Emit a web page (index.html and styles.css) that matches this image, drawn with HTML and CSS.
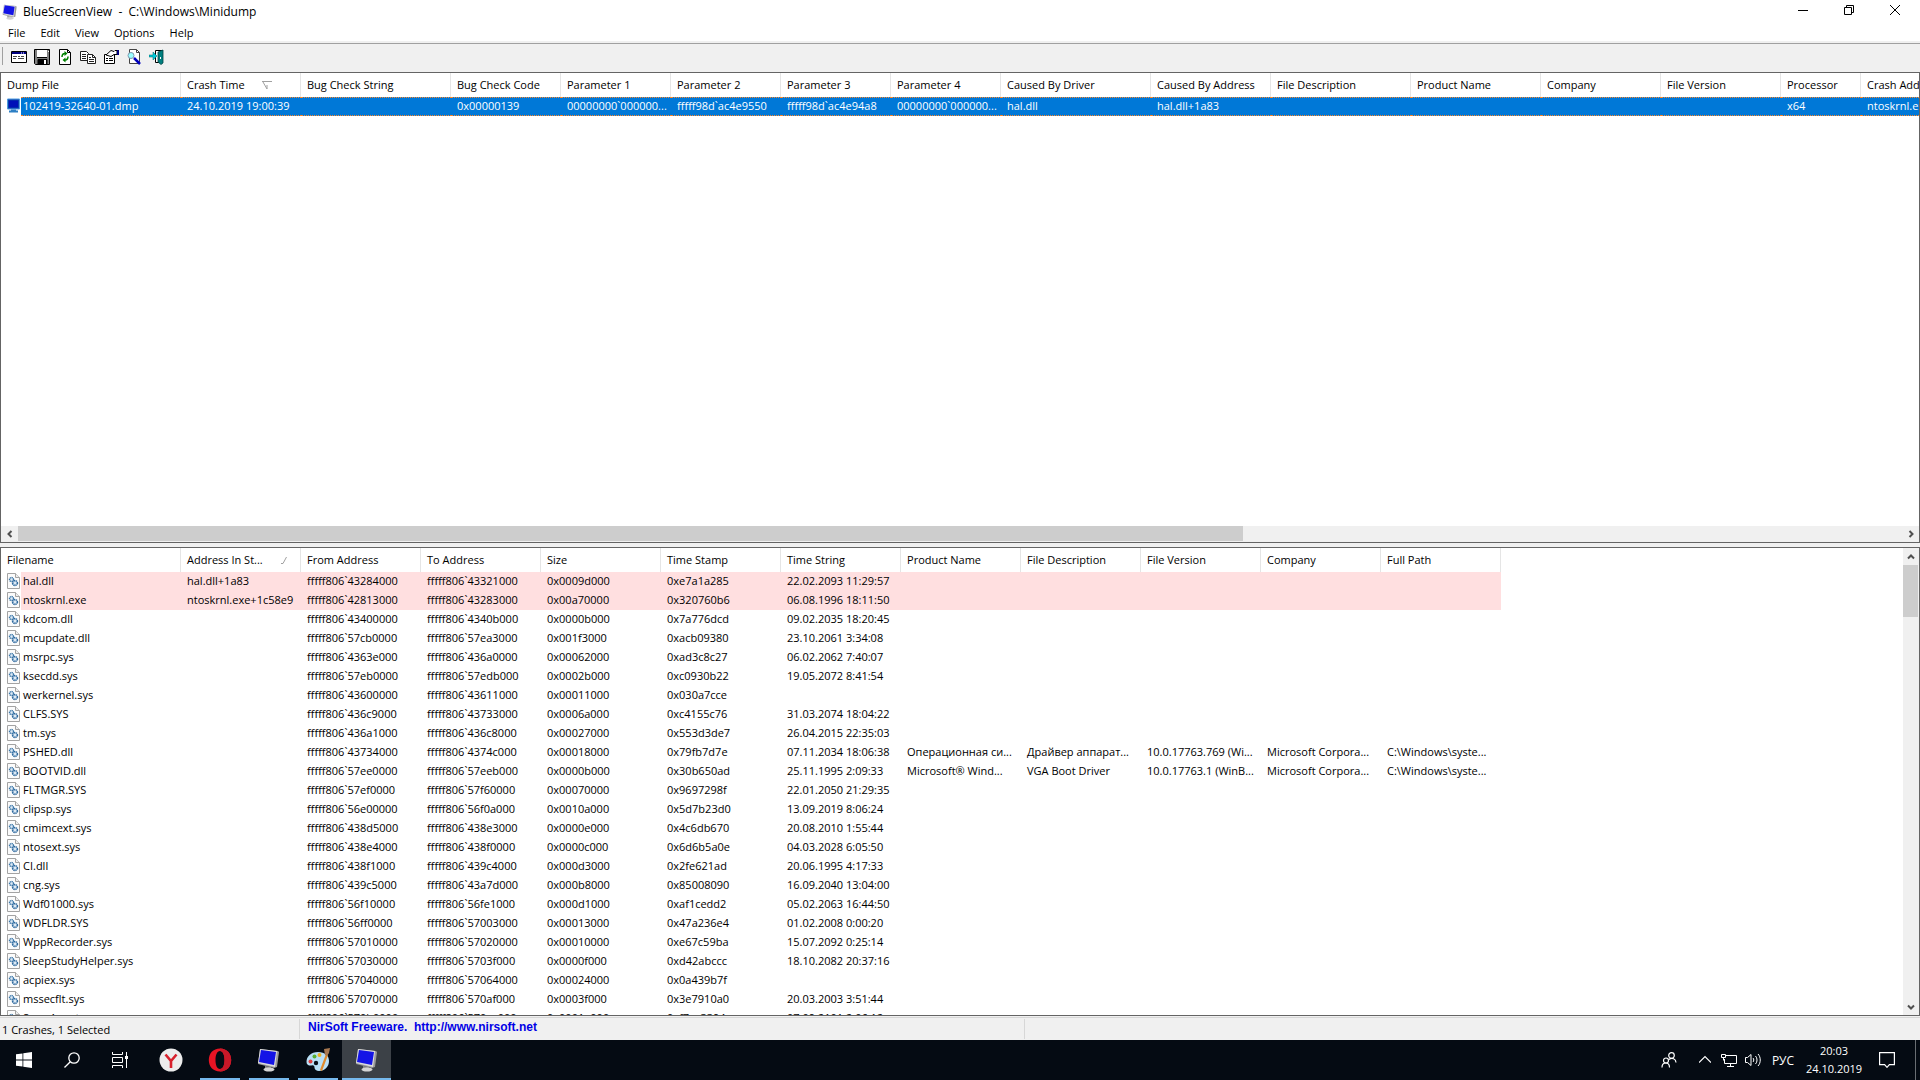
FILE: index.html
```
<!DOCTYPE html>
<html lang="en">
<head>
    <meta charset="UTF-8">
    <meta name="viewport" content="width=device-width, initial-scale=1.0">
    <title>BlueScreenView - C:\Windows\Minidump</title>
    <link rel="stylesheet" href="styles.css">
</head>
<body>
    <svg class="symbols" aria-hidden="true">
        <symbol id="monitor" viewBox="0 0 24 24">
            <path d="M8 18l6 1 1 2-7 1z" fill="#8c8c8c"/>
            <ellipse cx="12" cy="21.5" rx="5.5" ry="2" fill="#d4d4d4"/>
            <path d="M3 1l18 2 1 1-2 15-3 1-16-4z" fill="#9a9a9a"/>
            <path d="M3 1l17 2-2 16L1 15z" fill="#dcdcdc"/>
            <path d="M4 2l15 2-2 13L2 14z" fill="#1414e6"/>
        </symbol>
        <symbol id="dll" viewBox="0 0 13 16">
            <path d="M.5.5h8l4 4v11H.5z" fill="#fbfbfb" stroke="#a3a3a3"/>
            <path d="M8.500.5v4h4" fill="#eee" stroke="#a3a3a3"/>
            <circle cx="4.500" cy="6.500" r="2" fill="#dce9f5" stroke="#3b76a8" stroke-width="1.400" stroke-dasharray="1.200 .5"/>
            <circle cx="8" cy="10" r="2.400" fill="#dce9f5" stroke="#2f6a9e" stroke-width="1.600" stroke-dasharray="1.300 .5"/>
        </symbol>
    </svg>

    <header class="titlebar">
        <svg class="app-icon"><use href="#monitor"/></svg>
        <h1>BlueScreenView&nbsp; -&nbsp; C:\Windows\Minidump</h1>
        <div class="window-buttons">
            <button aria-label="Minimize"><svg viewBox="0 0 10 10"><path d="M0 5.500h10"/></svg></button>
            <button aria-label="Restore"><svg viewBox="0 0 10 10"><path d="M.5 2.500h7v7h-7zM2.500 2.500v-2h7v7h-2"/></svg></button>
            <button aria-label="Close"><svg viewBox="0 0 10 10"><path d="M0 0l10 10M10 0L0 10"/></svg></button>
        </div>
    </header>

    <nav class="menubar">
        <button>File</button>
        <button>Edit</button>
        <button>View</button>
        <button>Options</button>
        <button>Help</button>
    </nav>

    <div class="toolbar">
        <button aria-label="Advanced options">
            <svg viewBox="0 0 16 16"><path d="M.5 2.500h15v11H.5z" fill="#fff" stroke="#000"/><path d="M1 3h14v2H1z" fill="#000080"/><path d="M2 7.500h4M7 7.500h2M10 7.500h3M2 9.500h3M7 9.500h6" stroke="#444"/><path d="M10 4h1m1 0h1" stroke="#fff"/></svg>
        </button>
        <button aria-label="Save">
            <svg viewBox="0 0 16 16"><path d="M.5.5h15v15h-14l-1-1z" fill="#808080" stroke="#000"/><path d="M3 1h10v7H3z" fill="#fff"/><path d="M3 8.500h10M4 10.500h9v5H4z" stroke="#000" fill="#000"/><path d="M10 11h2v4h-2z" fill="#fff"/><path d="M14 2h1v1h-1z" fill="#fff"/></svg>
        </button>
        <button aria-label="Refresh">
            <svg viewBox="0 0 16 16"><path d="M2.500.5h8l3 3v12h-11z" fill="#fff" stroke="#000"/><path d="M10.500.5v3h3" fill="none" stroke="#000"/><path d="M5 8c0-3 1.500-3.500 3-3.500M11 7.500c0 3-1.500 3.500-3 3.500" fill="none" stroke="#008000" stroke-width="1.500"/><path d="M7.500 2v5l3-2.500zM8.500 8.500v5l-3-2.500z" fill="#008000"/></svg>
        </button>
        <button aria-label="Copy">
            <svg viewBox="0 0 16 16"><path d="M.5 2.500h6l2 2v7h-8z" fill="#fff" stroke="#222"/><path d="M2 5.500h4M2 7.500h4M2 9.500h4" stroke="#222"/><path d="M7.500 5.500h5l3 3v6h-8z" fill="#fff" stroke="#222"/><path d="M12.500 5.500v3h3M9 8.500h2M9 10.500h5M9 12.500h5" fill="none" stroke="#222"/></svg>
        </button>
        <button aria-label="Properties">
            <svg viewBox="0 0 16 16"><path d="M1.500 5.500h10v9h-10z" fill="#fff" stroke="#000"/><path d="M3 9.500h2M6 9.500h4M3 11.500h2M6 11.500h4" stroke="#000"/><path d="M3 6l5-4.500 3 1 1-1h2v4h-3L8 7.500z" fill="#fff" stroke="#000"/><path d="M14 1h2v5h-2z" fill="#000080"/></svg>
        </button>
        <button aria-label="Find">
            <svg viewBox="0 0 16 16"><path d="M3.500.5h7l3 3v11h-10z" fill="#fff" stroke="#444"/><path d="M10.500.5v3h3" fill="none" stroke="#444"/><circle cx="5" cy="6.500" r="3" fill="#9ff" stroke="#8098b0"/><path d="M8 9l6 6" stroke="#0000c0" stroke-width="2.500"/></svg>
        </button>
        <button aria-label="Exit">
            <svg viewBox="0 0 16 16"><path d="M6.500 1.500h7v12h-7z" fill="#fff" stroke="#000"/><path d="M9 3l5-2v13l-2 1.500L9 13z" fill="#008080" stroke="#044" stroke-width=".8"/><path d="M11 8h1v2h-1z" fill="#fff"/><path d="M0 6h4V3l4 4-4 4V8H0z" fill="#00c8d8" stroke="#066" stroke-width=".5"/></svg>
        </button>
    </div>

    <main class="panes">
        <section class="pane pane-crashes">
            <div class="list">
                <table>
                    <colgroup>
                        <col class="w20"><col class="w160"><col class="w120"><col class="w150">
                        <col class="w110"><col class="w110"><col class="w110"><col class="w110"><col class="w110">
                        <col class="w150"><col class="w120"><col class="w140"><col class="w130">
                        <col class="w120"><col class="w120"><col class="w80"><col class="w120">
                    </colgroup>
                    <thead>
                        <tr>
                            <th colspan="2">Dump File</th>
                            <th>Crash Time<svg class="sort sort-down" viewBox="0 0 10 8"><path d="M0 .5h10M1 1l4 7V4"/></svg></th>
                            <th>Bug Check String</th>
                            <th>Bug Check Code</th>
                            <th>Parameter 1</th>
                            <th>Parameter 2</th>
                            <th>Parameter 3</th>
                            <th>Parameter 4</th>
                            <th>Caused By Driver</th>
                            <th>Caused By Address</th>
                            <th>File Description</th>
                            <th>Product Name</th>
                            <th>Company</th>
                            <th>File Version</th>
                            <th>Processor</th>
                            <th>Crash Address</th>
                        </tr>
                    </thead>
                    <tbody>
                        <tr class="selected">
                            <td class="icon"><svg viewBox="0 0 13 15"><path d="M.5.500h12v10H.5z" fill="#0a3fa8" stroke="#4d9be0"/><path d="M2 2h9v7H2z" fill="#0010b8"/><path d="M4 11h5v1h2v2H2v-2h2z" fill="#2c7fc4"/></svg></td>
                            <td class="name">102419-32640-01.dmp</td>
                            <td>24.10.2019 19:00:39</td>
                            <td></td>
                            <td>0x00000139</td>
                            <td>00000000`000000...</td>
                            <td>fffff98d`ac4e9550</td>
                            <td>fffff98d`ac4e94a8</td>
                            <td>00000000`000000...</td>
                            <td>hal.dll</td>
                            <td>hal.dll+1a83</td>
                            <td></td>
                            <td></td>
                            <td></td>
                            <td></td>
                            <td>x64</td>
                            <td>ntoskrnl.exe+1c58e9</td>
                        </tr>
                    </tbody>
                </table>
            </div>
            <div class="scrollbar horizontal">
                <button aria-label="Scroll left"><svg viewBox="0 0 8 8"><path d="M5.500 1l-3 3 3 3"/></svg></button>
                <div class="track"><div class="thumb"></div></div>
                <button aria-label="Scroll right"><svg viewBox="0 0 8 8"><path d="M2.500 1l3 3-3 3"/></svg></button>
            </div>
        </section>

        <section class="pane pane-drivers">
            <div class="list">
                <table>
                    <colgroup>
                        <col class="w20"><col class="w160"><col class="w120" span="11">
                    </colgroup>
                    <thead>
                        <tr>
                            <th colspan="2">Filename</th>
                            <th>Address In St...<svg class="sort sort-up" viewBox="0 0 6 7"><path d="M0 6.500h2L5.500 0"/></svg></th>
                            <th>From Address</th>
                            <th>To Address</th>
                            <th>Size</th>
                            <th>Time Stamp</th>
                            <th>Time String</th>
                            <th>Product Name</th>
                            <th>File Description</th>
                            <th>File Version</th>
                            <th>Company</th>
                            <th>Full Path</th>
                        </tr>
                    </thead>
                    <tbody id="drivers"></tbody>
                </table>
            </div>
            <div class="scrollbar vertical">
                <button aria-label="Scroll up"><svg viewBox="0 0 8 8"><path d="M1 5.500l3-3 3 3"/></svg></button>
                <div class="track"><div class="thumb"></div></div>
                <button aria-label="Scroll down"><svg viewBox="0 0 8 8"><path d="M1 2.500l3 3 3-3"/></svg></button>
            </div>
        </section>
    </main>

    <div class="statusbar">
        <span class="status-count">1 Crashes, 1 Selected</span>
        <span class="status-link"><a href="http://www.nirsoft.net">NirSoft Freeware.&nbsp; http://www.nirsoft.net</a></span>
    </div>

    <footer class="taskbar">
        <div class="task-buttons">
            <button aria-label="Start"><svg class="s16" viewBox="0 0 16 16" fill="#fff"><path d="M0 2.300L6.500 1.400v6.200H0zM7.300 1.300L16 0v7.600H7.300zM0 8.400h6.500v6.200L0 13.700zM7.300 8.400H16V16l-8.700-1.300z"/></svg></button>
            <button aria-label="Search"><svg class="s16" viewBox="0 0 16 16" fill="none" stroke="#fff" stroke-width="1.300"><circle cx="10" cy="6" r="5.200"/><path d="M6.300 9.700L.5 15.500"/></svg></button>
            <button aria-label="Task View"><svg class="s16" viewBox="0 0 16 16" fill="none" stroke="#fff"><path d="M.5 0v2.500h10V0M.5 5.500h10v5H.5zM.5 16v-2.500h10V16M14.500 0v16"/><path d="M13 4h3v3h-3z" fill="#fff" stroke="none"/></svg></button>
            <div class="apps">
                <button aria-label="Yandex"><svg class="s24" viewBox="0 0 24 24"><circle cx="12" cy="12" r="11.500" fill="#ececec"/><path d="M6.500 6.500L12 13l5.500-6.500M12 12.500V20" fill="none" stroke="#d8202c" stroke-width="2.600"/></svg></button>
                <button class="open" aria-label="Opera"><svg class="s24" viewBox="0 0 24 24"><path fill-rule="evenodd" d="M12 .5C5 .5.800 5.500.8 12S5 23.500 12 23.500 23.200 18.500 23.200 12 19 .5 12 .5zM12 3c3 0 4.500 4 4.500 9s-1.500 9-4.500 9-4.500-4-4.500-9S9 3 12 3z" fill="#e81424"/><path d="M12 .5c7 0 11.200 5 11.200 11.500S19 23.500 12 23.500V21c3 0 4.500-4 4.500-9S15 3 12 3z" fill="#c81828"/></svg></button>
                <button class="open" aria-label="BlueScreenView"><svg class="s24"><use href="#monitor"/></svg></button>
                <button class="open" aria-label="Paint"><svg class="s24" viewBox="0 0 24 24"><path d="M12 4C5 4 .5 8.500.5 14c0 3 3 4 5 3.500 2-.5 3 .5 3 2 0 2 2 3.500 4.500 3.500C19 23 23 18.500 23 13S19 4 12 4z" fill="#b9e0f6"/><circle cx="10" cy="15" r="2.200" fill="#0a1018"/><circle cx="4.500" cy="13.500" r="2" fill="#e04040"/><circle cx="8.500" cy="8.500" r="2" fill="#58b030"/><circle cx="13.500" cy="7" r="2" fill="#f0b020"/><path d="M20 6l2 1-6 16-2-1z" fill="#e08a2c"/><path d="M18 1l6-1-1 5-2 3-2-1z" fill="#a87850"/></svg></button>
                <button class="open active" aria-label="BlueScreenView"><svg class="s24"><use href="#monitor"/></svg></button>
            </div>
        </div>
        <div class="tray">
            <button aria-label="People"><svg class="s16" viewBox="0 0 16 16" fill="none" stroke="#fff" stroke-width="1.200"><circle cx="10.500" cy="3.500" r="2.800"/><circle cx="5" cy="8.500" r="2.500"/><path d="M8 7.500c3-2.500 7-.5 7 3M1 15.500c0-6 7.500-6 7.500 0"/></svg></button>
            <button class="narrow" aria-label="Show hidden icons"><svg class="s12" viewBox="0 0 12 12" fill="none" stroke="#fff" stroke-width="1.200"><path d="M0 8.500l6-6 6 6"/></svg></button>
            <button class="narrow" aria-label="Network"><svg class="s16" viewBox="0 0 16 16" fill="none" stroke="#fff"><path d="M5 3.500h10.500v8H3.500V7M9.500 12v2.500M6 14.500h7M.5 2.500h4v3h-4zM2.500 5.500v3"/></svg></button>
            <button class="narrow" aria-label="Volume"><svg class="s16" viewBox="0 0 16 16" fill="none" stroke="#fff"><path d="M.5 5.500h2l3.500-3v11l-3.500-3h-2zM8 6c1 1 1 3 0 4M10.500 4c2 2 2 6 0 8M13 2c3 3 3 9 0 12"/></svg></button>
            <button class="lang">РУС</button>
            <button class="clock"><time>20:03</time><time>24.10.2019</time></button>
            <button class="notify" aria-label="Notifications"><svg class="s16" viewBox="0 0 16 16" fill="none" stroke="#fff" stroke-width="1.200"><path d="M.6.6h14.800v12h-5L8 15.300 5.600 12.600h-5z"/></svg></button>
            <button class="show-desktop" aria-label="Show desktop"></button>
        </div>
    </footer>

    <script src="script.js"></script>
</body>
</html>
```

FILE: styles.css
```
* {
    box-sizing: border-box;
}
body {
    margin: 0;
    height: 100vh;
    display: flex;
    flex-direction: column;
    overflow: hidden;
    background-color: #fff;
    color: #000;
    font-family: "Open Sans", "Noto Sans", sans-serif;
    font-size: 11px;
}
button {
    border: none;
    padding: 0;
    margin: 0;
    background: none;
    color: inherit;
    font: inherit;
    display: flex;
    align-items: center;
    justify-content: center;
}
.symbols {
    display: none;
}

/* title bar and menu */
.titlebar {
    display: flex;
    align-items: center;
    height: 23px;
    padding: 0 2px;
}
.titlebar h1 {
    margin: 0 0 0 5px;
    font-size: 12px;
    font-weight: normal;
    flex: 1;
}
.app-icon {
    width: 16px;
    height: 16px;
}
.window-buttons {
    display: flex;
    align-self: flex-start;
}
.window-buttons button {
    width: 46px;
    height: 20px;
}
.window-buttons svg {
    width: 10px;
    height: 10px;
    fill: none;
    stroke: #000;
}
.menubar {
    display: flex;
    height: 20px;
    gap: 1px;
    padding-left: 1px;
    border-bottom: 2px solid #f0f0f0;
}
.menubar button {
    padding: 0 7px;
}

/* toolbar */
.toolbar {
    display: flex;
    align-items: center;
    height: 29px;
    gap: 7px;
    padding: 0 0 3px 8px;
    background-color: #f0f0f0;
    border-top: 1px solid #a0a0a0;
    background-image: linear-gradient(#a0a0a0, #a0a0a0);
    background-repeat: no-repeat;
    background-size: 1px 18px;
    background-position: 2px 3px;
}
.toolbar button {
    width: 16px;
    height: 24px;
}
.toolbar svg {
    width: 16px;
    height: 16px;
}
.toolbar button:first-child {
    margin-left: 3px;
}

/* panes */
.panes {
    flex: 1;
    min-height: 0;
    display: flex;
    flex-direction: column;
    gap: 4px;
    background-color: #f0f0f0;
}
.pane {
    display: flex;
    min-height: 0;
    border: 1px solid #646464;
    background-color: #fff;
}
.pane-crashes {
    flex: 471 1 0;
    flex-direction: column;
}
.pane-drivers {
    flex: 469 1 0;
}
.list {
    flex: 1;
    min-width: 0;
    min-height: 0;
    overflow: hidden;
}
table {
    width: 0;
    table-layout: fixed;
    border-collapse: separate;
    border-spacing: 0;
}
.w20 { width: 20px; }
.w80 { width: 80px; }
.w110 { width: 110px; }
.w120 { width: 120px; }
.w130 { width: 130px; }
.w140 { width: 140px; }
.w150 { width: 150px; }
.w160 { width: 160px; }
th {
    height: 24px;
    padding: 0 0 1px 6px;
    font-weight: normal;
    text-align: left;
    white-space: nowrap;
    overflow: hidden;
    background: linear-gradient(#e5e5e5, #e5e5e5) right / 1px 100% no-repeat;
}
td {
    height: 19px;
    padding: 0 0 0 6px;
    line-height: 18px;
    vertical-align: top;
    white-space: nowrap;
    overflow: hidden;
}
td.name {
    padding-left: 2px;
}
td.icon {
    padding: 1px 0 0 6px;
}
td.icon svg {
    display: block;
    width: 13px;
    height: 16px;
}
.sort {
    fill: none;
    stroke: #a0a0a0;
}
.sort-down {
    width: 10px;
    height: 8px;
    margin-left: 17px;
}
.sort-up {
    width: 6px;
    height: 7px;
    margin-left: 18px;
}
.selected td:not(.icon) {
    color: #fff;
    background-color: #0078d7;
    border-top: 1px dotted #ff8728;
    border-bottom: 1px dotted #ff8728;
    line-height: 16px;
}
.in-stack td:not(.icon) {
    background-color: #ffdfe0;
}

/* scroll bars */
.scrollbar {
    display: flex;
    background-color: #f0f0f0;
}
.scrollbar svg {
    width: 8px;
    height: 8px;
    fill: none;
    stroke: #505050;
    stroke-width: 2;
}
.track {
    flex: 1;
}
.thumb {
    background-color: #cdcdcd;
}
.horizontal {
    height: 16px;
}
.horizontal button {
    width: 17px;
}
.horizontal .thumb {
    width: 65%;
    height: 15px;
}
.vertical {
    flex-direction: column;
    width: 16px;
}
.vertical button {
    height: 17px;
}
.vertical .thumb {
    width: 15px;
    height: 12%;
}

/* status bar */
.statusbar {
    display: flex;
    height: 24px;
    padding: 3px 0 1px;
    background: #f0f0f0 linear-gradient(#d7d7d7, #d7d7d7) 0 1px / 100% 1px no-repeat;
}
.statusbar span {
    border-right: 1px solid #d7d7d7;
}
.status-count {
    width: 300px;
    padding: 3px 0 0 2px;
}
.status-link {
    width: 725px;
    padding-left: 8px;
}
.status-link a {
    color: #0000e6;
    font: bold 12px "Liberation Sans", Arial, sans-serif;
    text-decoration: none;
}

/* taskbar */
.taskbar {
    display: flex;
    justify-content: space-between;
    height: 40px;
    background-color: #050b13;
    color: #fff;
}
.task-buttons,
.apps,
.tray {
    display: flex;
}
.task-buttons button {
    width: 48px;
}
.apps {
    margin-left: 2px;
}
.apps button {
    width: 49px;
    background: linear-gradient(#76b9ed, #76b9ed) center bottom / 0 2px no-repeat;
}
.apps .open {
    background-size: 40px 2px;
}
.apps .active {
    background-color: #3c4147;
    background-size: 100% 2px;
}
.s12 {
    width: 12px;
    height: 12px;
}
.s16 {
    width: 16px;
    height: 16px;
}
.s24 {
    width: 24px;
    height: 24px;
}
.tray button {
    width: 48px;
}
.tray .narrow {
    width: 24px;
}
.tray .lang {
    width: 36px;
    font-size: 12px;
}
.tray .clock {
    width: 66px;
    flex-direction: column;
    line-height: 18px;
}
.tray .notify {
    width: 40px;
}
.tray .show-desktop {
    width: 5px;
    margin-left: 8px;
    border-left: 1px solid #6a6e73;
}
```

FILE: script.js
```
// filename, address in stack, from, to, size, time stamp, time string, product, description, version, company, path
const drivers = [
    ["hal.dll", "hal.dll+1a83", "fffff806`43284000", "fffff806`43321000", "0x0009d000", "0xe7a1a285", "22.02.2093 11:29:57"],
    ["ntoskrnl.exe", "ntoskrnl.exe+1c58e9", "fffff806`42813000", "fffff806`43283000", "0x00a70000", "0x320760b6", "06.08.1996 18:11:50"],
    ["kdcom.dll", "", "fffff806`43400000", "fffff806`4340b000", "0x0000b000", "0x7a776dcd", "09.02.2035 18:20:45"],
    ["mcupdate.dll", "", "fffff806`57cb0000", "fffff806`57ea3000", "0x001f3000", "0xacb09380", "23.10.2061 3:34:08"],
    ["msrpc.sys", "", "fffff806`4363e000", "fffff806`436a0000", "0x00062000", "0xad3c8c27", "06.02.2062 7:40:07"],
    ["ksecdd.sys", "", "fffff806`57eb0000", "fffff806`57edb000", "0x0002b000", "0xc0930b22", "19.05.2072 8:41:54"],
    ["werkernel.sys", "", "fffff806`43600000", "fffff806`43611000", "0x00011000", "0x030a7cce", ""],
    ["CLFS.SYS", "", "fffff806`436c9000", "fffff806`43733000", "0x0006a000", "0xc4155c76", "31.03.2074 18:04:22"],
    ["tm.sys", "", "fffff806`436a1000", "fffff806`436c8000", "0x00027000", "0x553d3de7", "26.04.2015 22:35:03"],
    ["PSHED.dll", "", "fffff806`43734000", "fffff806`4374c000", "0x00018000", "0x79fb7d7e", "07.11.2034 18:06:38", "Операционная си...", "Драйвер аппарат...", "10.0.17763.769 (Wi...", "Microsoft Corpora...", "C:\\Windows\\syste..."],
    ["BOOTVID.dll", "", "fffff806`57ee0000", "fffff806`57eeb000", "0x0000b000", "0x30b650ad", "25.11.1995 2:09:33", "Microsoft® Wind...", "VGA Boot Driver", "10.0.17763.1 (WinB...", "Microsoft Corpora...", "C:\\Windows\\syste..."],
    ["FLTMGR.SYS", "", "fffff806`57ef0000", "fffff806`57f60000", "0x00070000", "0x9697298f", "22.01.2050 21:29:35"],
    ["clipsp.sys", "", "fffff806`56e00000", "fffff806`56f0a000", "0x0010a000", "0x5d7b23d0", "13.09.2019 8:06:24"],
    ["cmimcext.sys", "", "fffff806`438d5000", "fffff806`438e3000", "0x0000e000", "0x4c6db670", "20.08.2010 1:55:44"],
    ["ntosext.sys", "", "fffff806`438e4000", "fffff806`438f0000", "0x0000c000", "0x6d6b5a0e", "04.03.2028 6:05:50"],
    ["CI.dll", "", "fffff806`438f1000", "fffff806`439c4000", "0x000d3000", "0x2fe621ad", "20.06.1995 4:17:33"],
    ["cng.sys", "", "fffff806`439c5000", "fffff806`43a7d000", "0x000b8000", "0x85008090", "16.09.2040 13:04:00"],
    ["Wdf01000.sys", "", "fffff806`56f10000", "fffff806`56fe1000", "0x000d1000", "0xaf1cedd2", "05.02.2063 16:44:50"],
    ["WDFLDR.SYS", "", "fffff806`56ff0000", "fffff806`57003000", "0x00013000", "0x47a236e4", "01.02.2008 0:00:20"],
    ["WppRecorder.sys", "", "fffff806`57010000", "fffff806`57020000", "0x00010000", "0xe67c59ba", "15.07.2092 0:25:14"],
    ["SleepStudyHelper.sys", "", "fffff806`57030000", "fffff806`5703f000", "0x0000f000", "0xd42abccc", "18.10.2082 20:37:16"],
    ["acpiex.sys", "", "fffff806`57040000", "fffff806`57064000", "0x00024000", "0x0a439b7f", ""],
    ["mssecflt.sys", "", "fffff806`57070000", "fffff806`570af000", "0x0003f000", "0x3e7910a0", "20.03.2003 3:51:44"],
    ["SgrmAgent.sys", "", "fffff806`570b0000", "fffff806`570ca000", "0x0001a000", "0xf7ac3394", "07.09.2101 2:06:12"]
];

const columns = 12;
const body = document.getElementById("drivers");

drivers.forEach(driver => {
    const row = body.insertRow();
    // drivers found in the crash stack are highlighted
    if (driver[1]) {
        row.className = "in-stack";
    }
    const icon = row.insertCell();
    icon.className = "icon";
    icon.innerHTML = '<svg><use href="#dll"/></svg>';
    for (let i = 0; i < columns; i++) {
        const cell = row.insertCell();
        cell.textContent = driver[i] || "";
        if (i === 0) {
            cell.className = "name";
        }
    }
});
```
